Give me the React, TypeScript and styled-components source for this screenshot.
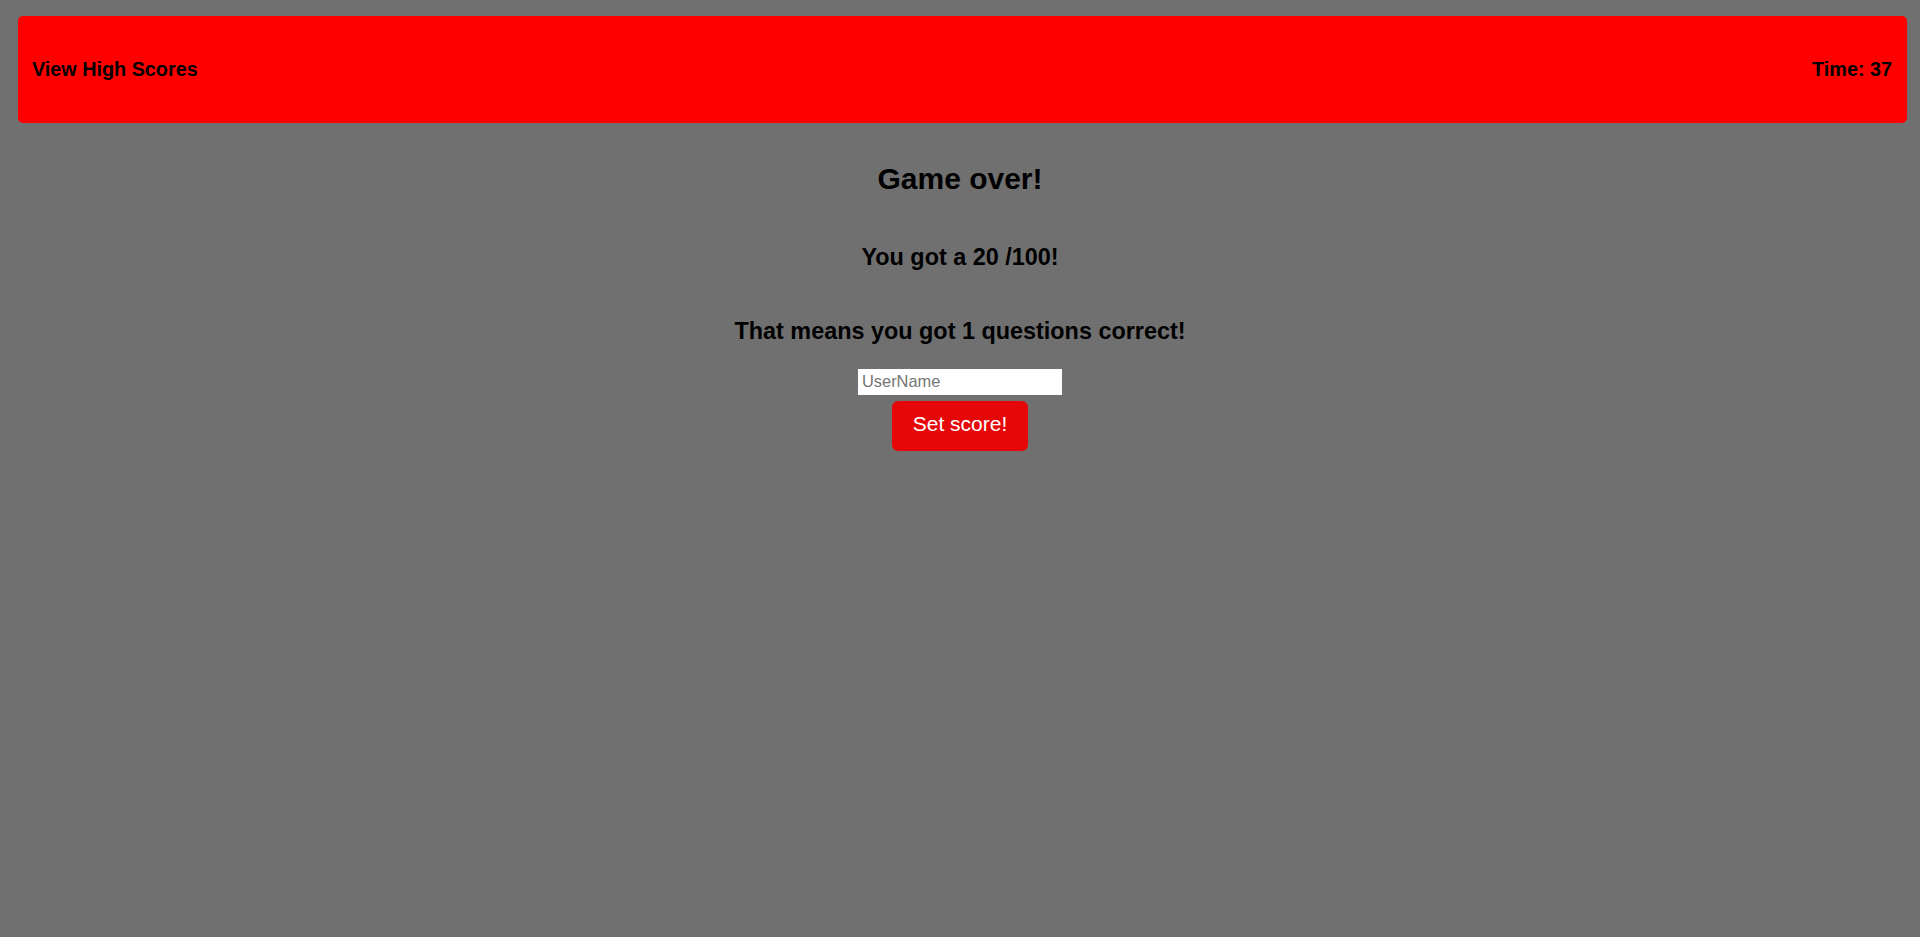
import React from 'react';
import styled, { createGlobalStyle } from 'styled-components';

const GlobalStyle = createGlobalStyle`
  body {
    margin: 0;
    background-color: #707070;
    font-family: 'Liberation Sans', Arial, sans-serif;
    font-size: 20px;
    color: #000;
  }
`

const Header = styled.header`
  display: flex;
  justify-content: space-between;
  align-items: center;
  height: 107px;
  margin: 16px 13px 0 18px;
  padding: 0 15px 0 14px;
  background-color: #ff0000;
  border-radius: 5px;
`

const HeaderText = styled.span`
  font-size: 19.8px;
  font-weight: 700;
`

const Main = styled.main`
  display: flex;
  flex-direction: column;
  align-items: center;
  padding-top: 14px;
`

const Title = styled.h2`
  font-size: 30px;
  margin: 25px 0;
`

const Result = styled.h3`
  font-size: 23.4px;
  margin: 23.4px 0;
`

const NameInput = styled.input`
  box-sizing: border-box;
  width: 204px;
  height: 26px;
  padding: 0 4px;
  border: none;
  outline: none;
  background: #fff;
  font-family: 'Liberation Sans', Arial, sans-serif;
  font-size: 16.4px;

  &::placeholder {
    color: #757575;
  }
`

const ScoreButton = styled.button`
  width: 136px;
  height: 50px;
  margin-top: 6px;
  padding: 0 0 3px;
  border: none;
  border-radius: 6px;
  background-color: #e60808;
  color: #fff;
  font-family: 'Liberation Sans', Arial, sans-serif;
  font-size: 21px;
  cursor: pointer;
`

export default function App() {
  return (
    <>
      <GlobalStyle />
      <Header>
        <HeaderText>View High Scores</HeaderText>
        <HeaderText>Time: 37</HeaderText>
      </Header>
      <Main>
        <Title>Game over!</Title>
        <Result>You got a 20 /100!</Result>
        <Result>That means you got 1 questions correct!</Result>
        <NameInput placeholder="UserName" />
        <ScoreButton>Set score!</ScoreButton>
      </Main>
    </>
  );
}
